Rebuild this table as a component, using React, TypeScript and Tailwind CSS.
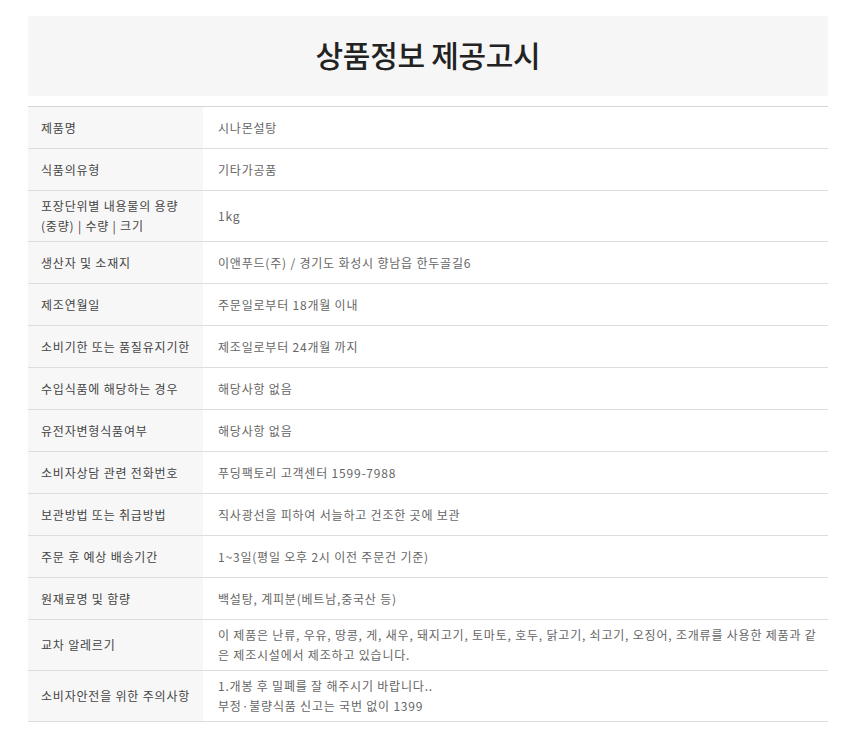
import React from "react";

const rows: [string, string[]][] = [
  ["제품명", ["시나몬설탕"]],
  ["식품의유형", ["기타가공품"]],
  ["포장단위별 내용물의 용량\n(중량) | 수량 | 크기", ["1kg"]],
  ["생산자 및 소재지", ["이앤푸드(주) / 경기도 화성시 향남읍 한두골길6"]],
  ["제조연월일", ["주문일로부터 18개월 이내"]],
  ["소비기한 또는 품질유지기한", ["제조일로부터 24개월 까지"]],
  ["수입식품에 해당하는 경우", ["해당사항 없음"]],
  ["유전자변형식품여부", ["해당사항 없음"]],
  ["소비자상담 관련 전화번호", ["푸딩팩토리 고객센터 1599-7988"]],
  ["보관방법 또는 취급방법", ["직사광선을 피하여 서늘하고 건조한 곳에 보관"]],
  ["주문 후 예상 배송기간", ["1~3일(평일 오후 2시 이전 주문건 기준)"]],
  ["원재료명 및 함량", ["백설탕, 계피분(베트남,중국산 등)"]],
  [
    "교차 알레르기",
    [
      "이 제품은 난류, 우유, 땅콩, 게, 새우, 돼지고기, 토마토, 호두, 닭고기, 쇠고기, 오징어, 조개류를 사용한 제품과 같",
      "은 제조시설에서 제조하고 있습니다.",
    ],
  ],
  ["소비자안전을 위한 주의사항", ["1.개봉 후 밀폐를 잘 해주시기 바랍니다..", "부정·불량식품 신고는 국번 없이 1399"]],
];

export default function App() {
  return (
    <div
      className="bg-white w-[849px] min-h-[732px] pt-[16px]"
      style={{ fontFamily: '"Noto Sans CJK KR", "Noto Sans", sans-serif' }}
    >
      <div className="ml-[28px] w-[800px]">
        <div className="h-[80px] bg-[#f6f6f6] flex items-center justify-center pb-[4px]">
          <h1 className="text-[30px] font-medium text-[#222] tracking-[-0.3px] leading-none">상품정보 제공고시</h1>
        </div>
        <div className="mt-[10px] border-t border-[#d6d6d6]">
          {rows.map(([label, value], i) => (
            <div key={i} className="flex border-b border-[#dddddd] text-[12px] leading-[20px] tracking-[0.8px]">
              <div className="w-[175px] shrink-0 bg-[#f7f7f7] pl-[13px] pr-1 py-[5px] min-h-[41px] flex items-center text-[#444] whitespace-pre-line">
                {label}
              </div>
              <div className="flex-1 pl-[15px] pr-2 py-[5px] min-h-[41px] flex flex-col justify-center text-[#666]">
                {value.map((v, j) => (
                  <div key={j} className="whitespace-nowrap">{v}</div>
                ))}
              </div>
            </div>
          ))}
        </div>
      </div>
    </div>
  );
}
